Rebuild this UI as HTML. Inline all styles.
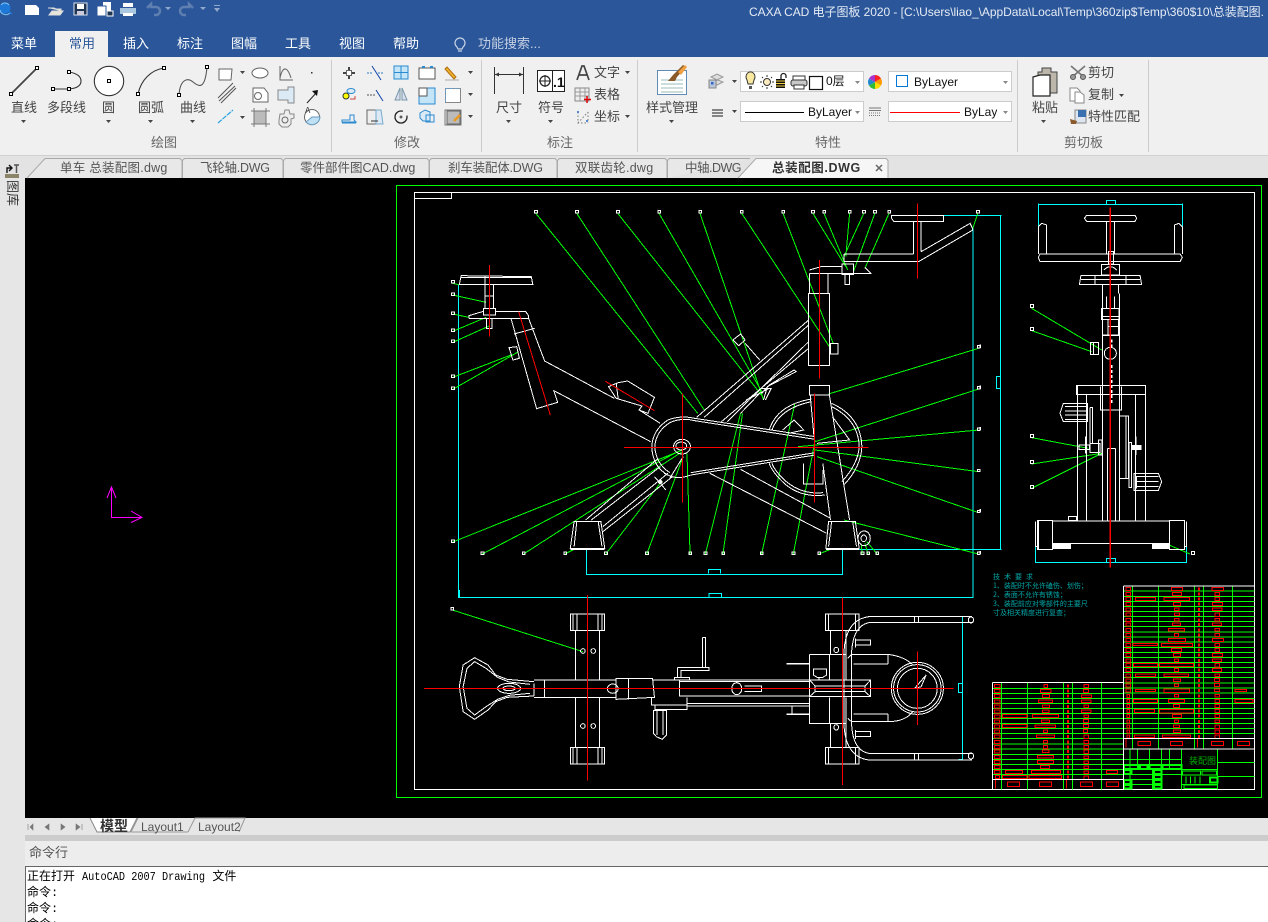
<!DOCTYPE html>
<html lang="zh"><head><meta charset="utf-8"><title>CAXA CAD 电子图板 2020</title>
<style>
html,body{margin:0;padding:0;width:1268px;height:922px;overflow:hidden;background:#f0f0f0}
body{position:relative;font-family:"Liberation Sans","Noto Sans CJK SC",sans-serif;font-size:13px;color:#444}
.b{position:absolute}
.t{position:absolute;line-height:18px;white-space:nowrap}
svg{position:absolute;left:0;top:0}
.d *{vector-effect:non-scaling-stroke;fill:none}
.c{shape-rendering:crispEdges}
.w{stroke:#fff}.g{stroke:#0f0}.r{stroke:#f00}.y{stroke:#0ff}
</style></head><body>
<div class="b" style="left:0;top:0;width:1268px;height:57px;background:#2b579a"></div>
<div class="b" style="left:55px;top:31px;width:53px;height:26px;background:#f0f0f0"></div>
<div class="b" style="left:0;top:57px;width:1268px;height:98px;background:#f0f0f0"></div>
<div class="b" style="left:0;top:155px;width:1268px;height:23px;background:#e3e3e3;border-top:1px solid #d0d0d0;box-sizing:border-box"></div>
<div class="b" style="left:0;top:178px;width:25px;height:744px;background:#e6e6e6"></div>
<div class="b" style="left:25px;top:178px;width:1243px;height:640px;background:#000"></div>
<div class="b" style="left:25px;top:818px;width:1243px;height:17px;background:#e6e6e6"></div>
<div class="b" style="left:25px;top:835px;width:1243px;height:6px;background:#ccc"></div>
<div class="b" style="left:25px;top:841px;width:1243px;height:25px;background:#ededed"></div>
<div class="b" style="left:25px;top:866px;width:1243px;height:56px;background:#fff;border-top:1px solid #666;border-left:1px solid #666;box-sizing:border-box"></div>

<svg width="1268" height="922" viewBox="0 0 1268 922">
<!-- quick access -->
<g>
<circle cx="5" cy="8" r="5.500" fill="#1d78d8"/><path d="M1 5a5 5 0 0 1 8 0M0 10a6 6 0 0 0 10 3" fill="none" stroke="#7cc4f4"/><path d="M8 11l4 3" stroke="#1d78d8" stroke-width="1.500"/>
<path d="M25 5h11l3 3v7H25z" fill="#fff"/>
<path d="M48 8h6l2 1h5v2H52l-3 4h11l3-4h-2" fill="#e8e4d8" stroke="#ddd"/>
<path d="M74 3h13v12H74z" fill="#1f3554" stroke="#dfe4ee"/><path d="M77 4h7v5h-7z" fill="#fff"/><path d="M77 11h7v4h-7z" fill="#ccd"/>
<path d="M103 2h8v9h-8z" fill="#fff"/><path d="M97 6h9v10h-9z" fill="#fff" stroke="#2b579a"/><path d="M107 11h6v5h-6z" fill="#1f3554" stroke="#fff"/>
<path d="M123 3h10v4h-10z" fill="#fff"/><path d="M120 8h16v6h-16z" fill="#a9c7de"/><path d="M123 13h10v3h-10z" fill="#fff"/>
<path d="M147 8l4-4v3h5a4 4 0 0 1 0 8h-2" fill="none" stroke="#5f7fb0" stroke-width="2.500"/>
<path d="M193 8l-4-4v3h-5a4 4 0 0 0 0 8h2" fill="none" stroke="#5f7fb0" stroke-width="2.500"/>
<path d="M165 7h6l-3 3zM200 7h6l-3 3z" fill="#8fa8cc"/>
<path d="M214 5h6v1h-6zM214 8h6l-3 4z" fill="#8fa8cc"/>
</g>
<!-- lightbulb -->
<path d="M457 47a5 5 0 1 1 6 0l-1 2h-4zM458 51h4" fill="none" stroke="#c8d2e4" stroke-width="1.200"/>
<!-- separators -->
<path d="M331.500 60V152M481.500 60V152M637.500 60V152M1017.500 60V152M1148.500 60V152" stroke="#ccc"/>
<!-- big draw icons -->
<g fill="none" stroke="#333">
<path d="M11 94L37 68" stroke="#444" stroke-width="1.800"/>
<path d="M53 89H69M69 72q12 2 12 9t-12 8" stroke-width="1.100"/>
<circle cx="109" cy="81" r="14.700" fill="#fff" stroke-width="1.100"/>
<path d="M138 94C141 80 151 70 164 68" stroke-width="1.100"/>
<path d="M179 95C180 80 187 77 193 82S205 90 207 67" stroke="#555" stroke-width="1.100"/>
<g fill="#fff" stroke="#000"><rect x="9.500" y="92.500" width="3" height="3"/><rect x="35.500" y="66.500" width="3" height="3"/><rect x="51.500" y="87.500" width="3" height="3"/><rect x="67.500" y="87.500" width="3" height="3"/><rect x="67.500" y="70.500" width="3" height="3"/><rect x="107.500" y="79.500" width="3" height="3"/><rect x="136.500" y="92.500" width="3" height="3"/><rect x="162.500" y="66.500" width="3" height="3"/><rect x="177.500" y="93.500" width="3" height="3"/><rect x="205.500" y="65.500" width="3" height="3"/></g>
</g>
<!-- dropdown arrows -->
<path d="M21 120h5l-2.500 3zM106 120h5l-2.500 3zM148 120h5l-2.500 3zM190 120h5l-2.500 3zM240 71h5l-2.500 3zM240 116h5l-2.500 3zM468 71h5l-2.500 3zM468 93h5l-2.500 3zM468 115h5l-2.500 3zM506 120h5l-2.500 3zM548 120h5l-2.500 3zM625 71h5l-2.500 3zM625 115h5l-2.500 3zM669 120h5l-2.500 3zM732 80h5l-2.500 3zM732 110h5l-2.500 3zM1041 120h5l-2.500 3zM1119 94h5l-2.500 3z" fill="#444"/>
<!-- small draw icons -->
<g fill="none" stroke="#666">
<path d="M219 69h13l-1 11h-12z" fill="#fff"/>
<ellipse cx="260" cy="73" rx="8" ry="5" fill="#fff"/>
<path d="M280 66V80H293M280 78C283 64 288 68 291 78"/>
<rect x="311" y="72" width="1.500" height="1.500" fill="#333" stroke="none"/>
<path d="M218 98L233 83M219 101L235 86M221 103L236 88" stroke="#555"/>
<path d="M253 88h11l4 5v9h-15z" fill="#fff"/><circle cx="258" cy="96" r="3.500"/>
<path d="M278 90h10v-3h6v16h-6v-3h-10z" fill="#dceaf6" stroke="#888"/>
<path d="M307 103L317 92" stroke="#222"/><path d="M312 91l6-1-1 6z" fill="#111" stroke="none"/>
<path d="M218 123L233 110" stroke="#2aa4e0" stroke-dasharray="5 1" stroke-width="1.200"/>
<rect x="254" y="111" width="12" height="13" fill="#bbb"/><path d="M251 111h19M251 124h19M254 108v19M266 108v19" stroke="#777"/>
<path d="M280 114h4l1-4h4l1 4h4v4l-3 1v5l-3 3h-6l-3-3v-4z" fill="#eee" stroke="#888"/><circle cx="285" cy="120" r="3"/>
<circle cx="312" cy="117" r="7.500" fill="#fff"/><path d="M312 117h8a8 8 0 0 1-14 5z" fill="#bfe0f5" stroke="#69b"/><text x="305" y="113" font-size="8" fill="#333" stroke="none" style="fill:#333">A</text>
<!-- modify -->
<path d="M349 67v4M349 75v4M343 73h4M351 73h4" stroke="#444" stroke-width="2"/><rect x="346.500" y="70.500" width="5" height="5" fill="#fff"/>
<path d="M367 73h6M378 73h5" stroke="#2b7ac4" stroke-dasharray="2 1"/><path d="M372 66L381 80" stroke="#14a"/>
<rect x="394" y="66" width="14" height="13" fill="#c4e4f8" stroke="#2a8ad0"/><path d="M401 66v13M394 72.500h14" stroke="#2a8ad0"/>
<rect x="419" y="68" width="16" height="11" fill="#fff" stroke="#555"/><path d="M422 67h3M430 67h3" stroke="#2a8ad0" stroke-width="2"/>
<path d="M445 69l9 10 2-2-9-10z" fill="#f0b030" stroke="#b07010"/><path d="M445 80h14" stroke="#aaa"/>
<circle cx="346" cy="96" r="3" fill="#ff0" stroke="#333"/><ellipse cx="351" cy="91" rx="4" ry="2.500" fill="#dceaf6" stroke="#2a8ad0"/><path d="M350 99h5v-3" stroke="#c44"/>
<path d="M367 95h8" stroke="#555" stroke-dasharray="2 1"/><path d="M376 90L383 101" stroke="#14a"/>
<path d="M400 88l-5 12h5zM402 88l5 12h-5z" fill="#dde" stroke="#79a"/>
<rect x="419" y="88" width="16" height="16" fill="#c4e4f8" stroke="#2a8ad0"/><rect x="419" y="88" width="8" height="8" fill="#fff" stroke="#555"/>
<rect x="445.500" y="88.500" width="15" height="14" fill="#fff" stroke="#888"/><path d="M445.500 102V88.500H460" stroke="#6a9fd0" stroke-dasharray="3 1.500"/>
<path d="M342 120h8v-5h4v5l2 2H342zM342 123h14" stroke="#2a8ad0" fill="none"/>
<path d="M367 110h9v14h-9z" fill="#eee" stroke="#666"/><path d="M376 110h5l2 14h-7z" fill="#dceaf6" stroke="#7ac"/><path d="M371 121h7" stroke="#333"/>
<circle cx="401" cy="117" r="6" stroke="#222" stroke-width="1.300" stroke-dasharray="30 6"/><circle cx="401" cy="117" r="1" fill="#222"/>
<path d="M420 113l5-3 5 2v9h-7l-3-3z" fill="#dceaf6" stroke="#2a8ad0"/><rect x="426" y="115" width="8" height="7" stroke="#2a8ad0"/>
<rect x="447" y="111" width="13" height="13" fill="#bbb"/><path d="M445 110v15h16V110z" stroke="#777"/><path d="M454 121l6-6" stroke="#e89a20" stroke-width="2.500"/>
<!-- dim -->
<path d="M494.500 67V94M523.500 67V94M495 74.500H523" stroke="#333" stroke-width="1"/>
<path d="M495 74.500l4-2v4zM523 74.500l-4-2v4z" fill="#333" stroke="none"/>
<rect x="537.500" y="70.500" width="27" height="21" fill="#fff" stroke="#222"/><path d="M552.500 71V91" stroke="#222"/>
<circle cx="545" cy="81" r="5" stroke="#222" stroke-width="1.200"/><path d="M539 81h12M545 75v12" stroke="#222"/>
<text x="553" y="87" font-size="14" font-weight="bold" fill="#111" stroke="none" font-family="Liberation Sans">.1</text>
<path d="M577 80l5-14h2l5 14M579 75h8" stroke="#444" stroke-width="1.700"/>
<rect x="575" y="88" width="14" height="13" fill="#eee" stroke="#888"/><path d="M575 92h14M575 96h14M580 88v13M585 88v13" stroke="#999"/><path d="M587 96v7M584 99.500h7" stroke="#d00" stroke-width="1.500"/>
<path d="M578 112v11h10M588 112v11M578 123l10-11" stroke="#777" stroke-dasharray="1.500 2"/><rect x="577" y="111" width="2" height="2" fill="#58c" stroke="none"/><rect x="586" y="120" width="2" height="2" fill="#58c" stroke="none"/>
<!-- style manager -->
<rect x="657.500" y="70.500" width="29" height="24" fill="#fff" stroke="#5f8bb5"/>
<path d="M661 80h22M661 84h22M661 88h22M661 92h22" stroke="#9bb"/>
<path d="M668 81l5-6 10-10 3 2-9 10-2 4z" fill="#8b5a2b" stroke="none"/><path d="M678 72l7-7 2 2-6 8z" fill="#f0a040" stroke="none"/>
<!-- layer icon -->
<path d="M711 77l6-3 6 3-6 3zM713 82l5-2 5 2-6 3z" fill="#ddd" stroke="#999"/><rect x="709" y="80" width="7" height="8" fill="#b8c6da" stroke="#888"/><rect x="711" y="82" width="2.500" height="2.500" fill="#36c" stroke="none"/>
<path d="M712 110h11M712 113h11M712 116h11" stroke="#444" stroke-width="1.300"/>
</g>
<g fill="none">
<rect x="740.500" y="71.500" width="123" height="20" fill="#fff" stroke="#ccc"/>
<rect x="740.500" y="101.500" width="123" height="20" fill="#fff" stroke="#ccc"/>
<rect x="888.500" y="71.500" width="123" height="20" fill="#fff" stroke="#ccc"/>
<rect x="888.500" y="101.500" width="123" height="20" fill="#fff" stroke="#ccc"/>
<path d="M747 80a4.500 5 0 1 1 7 0l-1 4h-5z" fill="#f8e8a0" stroke="#333"/><path d="M749 86h3v3h-3z" fill="#555"/>
<circle cx="767" cy="82" r="3.500" fill="#fcecc0" stroke="#333"/><path d="M767 75v2M767 87v2M760 82h2M772 82h2M762 77l1 1M771 86l1 1M762 87l1-1M771 78l1-1" stroke="#333"/>
<path d="M776 79h9v9h-9z" fill="#111"/><path d="M776 81h9M776 83.500h9M776 86h9" stroke="#f0d040"/><path d="M781 79v-3a2.500 2.500 0 0 1 5 0v2" stroke="#222" stroke-width="1.300"/>
<rect x="793" y="76" width="12" height="4" fill="#fff" stroke="#333"/><rect x="791" y="80" width="16" height="6" rx="2" fill="#c8c8c8" stroke="#333"/><rect x="794" y="85" width="10" height="4" fill="#fff" stroke="#333"/>
<rect x="809.500" y="76.500" width="13" height="13" fill="#fff" stroke="#111" stroke-width="1.200"/>
<path d="M855 81h5l-2.500 3zM855 111h5l-2.500 3zM1003 81h5l-2.500 3zM1003 111h5l-2.500 3z" fill="#888"/>
<path d="M745 112.500H804" stroke="#000"/><path d="M890 112.500H960" stroke="#f00"/>
<rect x="896.500" y="75.500" width="11" height="11" stroke="#0078d7" fill="#fff"/>
<path d="M869 108h12M869 110.500h12" stroke="#777"/><path d="M869 113h12M869 115.500h12" stroke="#777" stroke-dasharray="1 1"/>
<!-- colour wheel -->
<circle cx="875" cy="82" r="6.500" fill="#fff"/>
<path d="M875 82V75A7 7 0 0 1 881 78.500z" fill="#f22"/><path d="M875 82L881 78.500A7 7 0 0 1 881 85.500z" fill="#f90"/><path d="M875 82L881 85.500A7 7 0 0 1 875 89z" fill="#fd0"/><path d="M875 82V89A7 7 0 0 1 869 85.500z" fill="#3b3"/><path d="M875 82L869 85.500A7 7 0 0 1 869 78.500z" fill="#28c"/><path d="M875 82L869 78.500A7 7 0 0 1 875 75z" fill="#a3c"/>
<!-- paste -->
<path d="M1038 72h4v-4h9v4h6v21h-19z" fill="#bdb7ab" stroke="#444"/>
<path d="M1033 77l7-2h10v21h-17z" fill="#fff" stroke="#222" stroke-width="1.200"/>
<path d="M1071 66l14 12M1085 66l-14 12" stroke="#777" stroke-width="1.700"/><circle cx="1073" cy="77" r="2.500" stroke="#555" fill="#999"/><circle cx="1083" cy="77" r="2.500" stroke="#555" fill="#999"/>
<path d="M1070 88h7l3 3v10h-10z" fill="#fff" stroke="#888"/><path d="M1075 92h5l4 3v8h-9z" fill="#fff" stroke="#888"/>
<rect x="1075" y="110" width="11" height="13" fill="#dde6f0" stroke="#888"/><rect x="1078" y="110" width="8" height="7" fill="#3a70b0"/><path d="M1070 119l7 2-1 3h-5z" fill="#8b5a2b"/>
</g>
<!-- doc tabs -->
<g fill="none" stroke="#aaa">
<path d="M27 178L45 158.500H180l2 2V178" fill="#e8e8e8"/>
<path d="M182.500 178V160.500l2-2H281l2 2V178" fill="#e8e8e8"/>
<path d="M283.500 178V160.500l2-2H427l2 2V178" fill="#e8e8e8"/>
<path d="M429.500 178V160.500l2-2H555l2 2V178" fill="#e8e8e8"/>
<path d="M557.500 178V160.500l2-2H665l2 2V178" fill="#e8e8e8"/>
<path d="M667.500 178V160.500l2-2H750" fill="#e8e8e8"/>
<path d="M738 178L756 158.500H886l2 2V178" fill="#f6f6f6"/>
<path d="M876 165l6 6M882 165l-6 6" stroke="#666" stroke-width="1.500"/>
</g>
<!-- library icon -->
<rect x="5" y="174" width="14" height="4" fill="#8a8468"/><path d="M7 173v-5h4M9 165l3 3-3 3" fill="none" stroke="#111" stroke-width="1.400"/><path d="M14 165h5M16.500 165v8" stroke="#555" stroke-width="1.500"/>
<!-- layout tabs -->
<path d="M90 818l7 14h33l7-14" fill="#fff" stroke="#888"/>
<path d="M131 832l7-14M188 832l7-14h50l-6 14M188 832H131" fill="none" stroke="#999"/>
<path d="M28 824v6M33 824l-3 3 3 3zM49 824l-4 3 4 3zM61 824l4 3-4 3zM76 824l4 3-4 3zM82 824v6" fill="#777" stroke="#777" stroke-width=".6"/>

<!-- CAD -->
<rect x="396.500" y="185.500" width="865" height="612" fill="none" stroke="#0f0" shape-rendering="crispEdges"/>
<rect x="414.500" y="192.500" width="840" height="597" fill="none" stroke="#fff" shape-rendering="crispEdges"/>
<path d="M415 198.500H451.500V192.500" fill="none" stroke="#fff" shape-rendering="crispEdges"/>
<!-- UCS -->
<g fill="none" stroke="#f0f"><path d="M111.500 517V487M107 498l4.500-11 4.500 11M111 517.500H142M131 511l11 6.500-11 5"/></g>

<!-- side elevation z4 -->
<g class="d c" transform="matrix(.38265 0 0 .33333 400 180)">
<path class="y" d="M153 315V1253H1498V140M1405 106H1568M1185 1108H1568M488 1108V1183H1157V1108M806 1180V1168H838V1180M808 1253V1240H840V1253"/>
<path class="g" d="M355 100L778 700M462 100L795 690M569 100L948 650M677 100L948 640M784 100L950 660M893 100L1125 505M1001 100L1132 490M1079 100L1165 260M1108 100L1170 270M1175 100L1165 230M1212 100L1160 230M1241 100L1185 275M1278 100L1215 265M1510 100L1497 145M138 310L155 315M138 345L225 367M138 402L180 412M138 454L225 412M138 487L235 437M138 592L290 525M138 628L310 515M138 1086L738 810M215 1122L738 808M323 1122L738 815M431 1122L460 1105M538 1122L680 910M645 1122L740 830M758 1122L750 820M798 1122L890 700M844 1122L895 700M945 1122L1032 670M1028 1122L1085 780M1095 1122L1125 1108M1208 1122L1205 1090M1223 1122L1215 1090M1247 1122L1220 1085M1512 505L1120 642M1512 627L1085 785M1512 750L1040 800M1512 875L1085 810M1512 998L1090 830M1512 1122L1160 1020"/>
<path class="w" d="M352 92h7v7h-7zM459 92h7v7h-7zM566 92h7v7h-7zM674 92h7v7h-7zM781 92h7v7h-7zM890 92h7v7h-7zM998 92h7v7h-7zM1076 92h7v7h-7zM1105 92h7v7h-7zM1172 92h7v7h-7zM1209 92h7v7h-7zM1238 92h7v7h-7zM1275 92h7v7h-7zM1507 92h7v7h-7zM135 302h7v7h-7zM135 339h7v7h-7zM135 396h7v7h-7zM135 447h7v7h-7zM135 480h7v7h-7zM135 585h7v7h-7zM135 621h7v7h-7zM135 1080h7v7h-7zM212 1116h7v7h-7zM320 1116h7v7h-7zM428 1116h7v7h-7zM535 1116h7v7h-7zM642 1116h7v7h-7zM755 1116h7v7h-7zM795 1116h7v7h-7zM841 1116h7v7h-7zM942 1116h7v7h-7zM1025 1116h7v7h-7zM1092 1116h7v7h-7zM1205 1116h7v7h-7zM1220 1116h7v7h-7zM1244 1116h7v7h-7zM1509 497h7v7h-7zM1509 620h7v7h-7zM1509 744h7v7h-7zM1509 868h7v7h-7zM1509 991h7v7h-7zM1509 1116h7v7h-7z"/>
<g class="w">
<path d="M155 313H347L343 290 160 287ZM160 293H343M222 287V313M222 313V385M245 313V385M222 348H245M180 415H336V407L328 394H250M218 394L180 407V415M226 415V445H240V415"/>
<path d="M218 385H250V405H218ZM290 415L357 686 412 667 402 632 655 785M336 415L378 543 560 655M625 690L680 730M298 462L352 445M285 503L305 500 312 535 295 540Z"/>
<path d="M545 620L570 608 595 603 665 652 648 700 625 690 632 678 565 655 545 620ZM565 610L570 655"/>
<path d="M770 715Q735 705 700 720 660 750 658 800 660 860 700 885 725 900 760 885 M770 722Q735 712 705 728 668 755 666 800 668 850 705 878"/>
<path d="M770 715L1085 770M770 722L1085 778M760 885L1085 825M760 878L1085 818"/>
<ellipse cx="737" cy="800" rx="22" ry="22"/><ellipse cx="735" cy="798" rx="14" ry="12"/>
<path d="M775 712L1068 420M795 712L1068 435M840 725L1068 505M855 725L1068 485M1067 340H1122V556H1067ZM1070 280V340M1118 280V340M1070 280H1230L1215 262M1070 270L1100 260H1155M1155 252H1185V283H1155ZM1163 283V313H1175V283M1125 490H1145V522H1125Z"/>
<path d="M1285 107H1420V124H1290L1285 115ZM1342 124V222M1362 124V215M1160 222H1342M1160 245H1355L1497 150M1362 215L1490 130 1497 148M1160 222V245"/>
<path d="M870 480L890 462 902 480 885 497ZM902 490L940 540M890 700L940 640M950 660L960 620 1035 575 1030 570 965 615 945 640M905 660L965 625M945 625L970 625 955 660"/>
<path d="M965 750Q985 675 1075 657M972 750Q992 685 1075 665M1128 670Q1205 710 1207 800 1205 860 1160 915M1128 680Q1198 720 1200 800 1198 850 1155 905M1110 945Q1040 955 995 900 970 870 965 850M1105 938Q1045 945 1000 895 978 870 972 850"/>
<path d="M1070 616H1122V645H1070ZM1072 645L1082 770M1122 645L1130 700 1160 915 1175 1020M1105 850L1125 1020M810 880L1115 1060M890 868L1125 1015M1130 710L1175 780 1090 790M1000 750L1030 720 1055 750 1015 760M1055 850V912H1105V870"/>
<path d="M455 1025H525L535 1105H445ZM462 1025L455 1100M518 1025L528 1100M445 1108H535M1120 1025H1190L1200 1105H1113ZM1128 1025L1120 1100M1183 1025L1193 1100M1113 1108H1200"/>
<path d="M485 1020L675 835M500 1020L680 860M530 1040L700 880M530 1055L712 890M665 890L695 930M740 830L705 895M690 880L700 885"/>
<ellipse cx="1213" cy="1075" rx="16" ry="22"/><ellipse cx="1212" cy="1075" rx="7" ry="10"/>
</g>
<circle cx="680" cy="906" r="5" fill="#fff" stroke="#fff" style="fill:#fff"/>
<path class="r" d="M310 395L393 706M537 604L665 692M585 802H1225M738 640V968M1083 640V968M1352 70V296M1096 240V596M234 255V470"/>
</g>

<!-- plan view z5 -->
<g class="d c" transform="matrix(.38265 0 0 .33333 400 590)">
<path class="y" d="M1470 78V508M1460 80H1470M1460 508H1470M1470 280H1460V308H1470M155 0V22H1498V0"/>
<path class="g" d="M137 60L478 185"/>
<path class="w" d="M133 52h7v8h-7z"/>
<g class="w">
<path d="M445 72H535V122H445ZM452 72V122M462 72V122M518 72V122M528 72V122M445 472H535V522H445ZM452 472V522M462 472V522M518 472V522M528 472V522M458 122V270M522 122V270M458 322V472M522 322V472"/>
<ellipse cx="478" cy="183" rx="6" ry="7"/><ellipse cx="505" cy="183" rx="6" ry="7"/><ellipse cx="478" cy="408" rx="6" ry="7"/><ellipse cx="505" cy="408" rx="6" ry="7"/>
<path d="M1112 72H1200V122H1112ZM1120 72V122M1190 72V122M1112 472H1200V522H1112ZM1120 472V522M1190 472V522M1125 122V193M1125 400V472M1165 122V193M1165 400V472"/>
<path d="M350 270H565M350 322H565M378 270V322M565 265H660L665 322 565 328 Z M597 265V328M660 270H1070M730 275H1070M730 318H1070M730 270V320M657 322V345H750V358H667V345M750 340H1070M750 348H1070M750 322V345"/>
<path d="M350 275L280 268 250 255 230 225 195 203 165 225 155 290 165 365 195 388 230 360 250 335 280 322 350 318M340 283L285 276 255 262 225 235 195 215 175 235 165 290 175 355 195 375 225 350 255 328 285 316 340 310"/>
<ellipse cx="285" cy="295" rx="30" ry="15"/><ellipse cx="285" cy="295" rx="16" ry="7"/><ellipse cx="556" cy="296" rx="14" ry="14"/><ellipse cx="880" cy="296" rx="13" ry="18"/>
<path d="M350 280V318M900 288H945V304H900M790 142H798V232M790 142V232M725 232H808V242H735V262M725 232V262M717 262H757V270H717Z"/>
<path d="M662 362H697V435L685 448 670 440 662 430ZM672 362V435M687 362V435"/>
<path d="M1070 193H1165V270M1070 193V270M1070 322V400H1165V322M1122 193V270M1122 322V400M1010 222H1070M1010 220H1070M1010 372H1070M1010 374H1070M1025 350V372"/>
<path d="M1070 270H1230V320H1070ZM1070 270L1085 288V305L1070 320M1230 270L1215 288V305L1230 320M1085 288H1215M1085 305H1215M1180 288V305"/>
<path d="M1495 80H1225Q1160 90 1160 200V390Q1160 500 1225 510H1495M1495 98H1225Q1180 110 1180 200V390Q1180 480 1225 490H1495M1345 80V98M1355 80V98M1345 490V510M1355 490V510"/>
<ellipse cx="1492" cy="90" rx="7" ry="9"/><ellipse cx="1492" cy="498" rx="7" ry="9"/>
<path d="M1170 205L1180 193H1275Q1320 200 1340 225M1170 385L1180 395H1275Q1320 395 1340 365M1185 222H1275M1185 372H1275M1275 193V222M1275 372V395"/>
<ellipse cx="1352" cy="295" rx="68" ry="78"/><ellipse cx="1352" cy="295" rx="62" ry="71"/><ellipse cx="1352" cy="295" rx="52" ry="60"/>
<path d="M1345 295L1375 255 1362 290 1345 295M1190 150H1230V165H1190ZM1190 145V172M1190 425H1230V440H1190ZM1190 420V447"/>
<ellipse cx="1140" cy="180" rx="6" ry="8"/><ellipse cx="1140" cy="412" rx="6" ry="8"/><path d="M1080 237H1115V255L1105 262H1090L1080 255ZM1095 262V270"/>
</g>
<path class="r" d="M63 295H1447M490 15V572M1156 22V585M1352 185V405"/>
</g>

<!-- front elevation z6 -->
<g class="d c" transform="matrix(.33333 0 0 .33333 980 180)">
<path class="y" d="M0 106H65M61 106V1108M0 1108H65M49 590H61V625H49ZM175 70V140M175 73H607M607 70V140M379 73V62H407V73M166 1070V1148H619V1070M379 1148V1135H407V1148"/>
<path class="g" d="M155 385L365 510M155 452L335 515M155 773L325 805M155 852L365 820M155 925L365 820M630 1122L560 1092"/>
<path class="w" d="M151 374h9v9h-9zM151 442h9v9h-9zM151 763h9v9h-9zM151 842h9v9h-9zM151 916h9v9h-9zM635 1114h9v9h-9zM0 495h2v7h-2zM0 618h2v7h-2zM0 742h2v7h-2zM0 988h2v7h-2zM0 1114h2v7h-2z"/>
<g class="w">
<path d="M313 115L320 106H465L470 115 465 124H320ZM379 124V222M404 124V222M180 222H600L607 232 600 245H180L175 232ZM175 222V140L185 130 200 135V222M583 222V135L597 130 607 140V222M385 215H400V252H385Z"/>
<path d="M364 253H419V285H364ZM372 270Q391 250 410 270M303 286H480L485 314H298ZM345 286V314M438 286V314M303 298H480M367 314V340M416 314V340M367 340V685M419 340V685M380 350V385M404 350V385M364 385H417V418H364ZM364 410H417M384 418V465M416 418V465M385 440H416M367 465H417M367 467H417"/>
<circle cx="391" cy="520" r="18"/>
<path d="M361 620V690H425V620M289 616H497V644H289ZM292 616V644M292 644V1023M320 644V1023M466 644V1023M497 644V1023M367 616V690M419 616V690M367 690V1023M419 690V1023M382 805V1023M407 805V1023M382 805H407"/>
<path d="M250 670H323V725H250L240 700ZM255 680H320M255 693H320M255 705H320M255 718H320M462 880H535L545 905 535 932H462ZM468 890H535M468 905H535M468 920H535M470 890V925M330 682H338V790M330 682V790M420 708H445V895H420M438 708V895M447 787H455V922H447ZM330 790H360V818H330ZM356 780H366V825H356ZM297 795H328V808H297ZM316 770V820M468 770V825M332 487H356V523H332ZM340 487V523"/>
<path d="M218 1023H568M218 1090H568M172 1021H218V1108H172ZM166 1025V1100H172M175 1021V1108M568 1021H614V1108H568ZM620 1025V1100H614M265 1010H290V1022H265Z"/>
</g>
<path d="M218 1090H272V1105H218ZM517 1090H568V1105H517ZM455 796H483V808H455Z" style="fill:#fff" stroke="#fff"/>
<path d="M393 478V502M393 555V672" style="stroke:#fff;stroke-width:3;stroke-dasharray:3 2"/>
<path class="r" d="M391 82V1163" style="stroke-width:1.500"/>
</g>

<!-- tables z7 -->
<g class="d c" transform="matrix(.33333 0 0 .33333 980 570)">
<path class="g" d="M430 63H824M430 79H824M430 94H824M430 109H824M430 125H824M430 140H824M430 155H824M430 170H824M430 186H824M430 201H824M430 216H824M430 232H824M430 247H824M430 262H824M430 277H824M430 293H824M430 308H824M430 323H824M430 339H824M430 354H824M430 369H824M430 385H824M430 400H824M430 415H824M430 430H824M430 446H824M430 461H824M430 476H824M430 491H824M457 48V537M535 48V537M643 48V537M670 48V537M757 48V537"/>
<path class="g" d="M37 355H430M37 370H430M37 385H430M37 400H430M37 415H430M37 431H430M37 446H430M37 461H430M37 476H430M37 491H430M37 506H430M37 522H430M37 537H430M37 553H430M37 568H430M37 583H430M37 598H430M37 613H430M65 337V658M142 337V658M250 337V658M277 337V658M364 337V658"/>
<path class="g" d="M430 568H604M430 613H604M432 628H520M432 643H520M450 537V658M472 537V598M508 537V598M518 598V658M545 537V658M568 537V598M604 537V658M713 537V658M713 577H824M713 619H824M604 598H713M604 643H713M608 603H662V615H608ZM666 603H710V615H666ZM612 645H712V655H612ZM618 620V640M632 620V640M645 620V640M660 620V640"/>
<path class="g" style="stroke-width:2" d="M432 585H475V597H432ZM480 585H502V597H480ZM508 585H545V597H508ZM548 585H604V597H548ZM432 600H455V612H432ZM432 630H455V642H432ZM432 645H455V656H432ZM522 600H545V612H522ZM522 615H545V627H522ZM522 630H545V642H522ZM522 645H545V656H522ZM690 622H712V638H690Z"/>
<path class="r" d="M438 53h13v9h-13zM438 68h13v9h-13zM438 83h13v9h-13zM438 98h13v9h-13zM438 114h13v9h-13zM438 129h13v9h-13zM438 145h13v9h-13zM438 159h13v9h-13zM438 175h13v9h-13zM438 191h13v9h-13zM438 206h13v9h-13zM438 221h13v9h-13zM438 236h13v9h-13zM438 251h13v9h-13zM438 267h13v9h-13zM438 281h13v9h-13zM438 296h13v9h-13zM438 312h13v9h-13zM438 327h13v9h-13zM438 342h13v9h-13zM438 357h13v9h-13zM441 373h8v9h-8zM441 389h8v9h-8zM441 404h8v9h-8zM441 419h8v9h-8zM441 434h8v9h-8zM441 450h8v9h-8zM441 465h8v9h-8zM441 480h8v9h-8zM441 495h8v9h-8z"/>
<path class="r" style="stroke-width:2" d="M657 53v9M657 68v9M657 83v9M657 98v9M657 114v9M657 129v9M657 145v9M657 159v9M657 175v9M657 191v9M657 206v9M657 221v9M657 236v9M657 251v9M657 267v9M657 281v9M657 296v9M657 312v9M657 327v9M657 342v9M657 357v9M657 373v9M657 389v9M657 404v9M657 419v9M657 434v9M657 450v9M657 465v9M657 480v9M657 495v9M264 344v9M264 359v9M264 374v9M264 390v9M264 405v9M264 420v9M264 435v9M264 450v9M264 465v9M264 480v9M264 495v9M264 511v9M264 526v9M264 540v9M264 556v9M264 571v9M264 586v9M264 602v9M264 617v9"/>
<path class="r" d="M44 344h16v9H44zM44 359h16v9H44zM44 374h16v9H44zM44 390h16v9H44zM44 405h16v9H44zM44 420h16v9H44zM44 435h16v9H44zM44 450h14v9H44zM44 465h14v9H44zM44 480h14v9H44zM44 495h16v9H44zM44 511h16v9H44zM44 526h16v9H44zM44 540h16v9H44zM44 556h16v9H44zM44 571h16v9H44zM44 586h16v9H44zM44 602h16v9H44zM46 617h12v9H46z"/>
<path class="r" d="M574 53H608V61H574ZM577 68H605V76H577ZM552 83H629V91H552ZM466 83H527V91H466ZM580 98H602V106H580ZM583 114H597V122H583ZM583 129H598V137H583ZM583 145H597V153H583ZM577 159H602V167H577ZM565 175H614V183H565ZM583 191H596V199H583ZM565 206H617V214H565ZM544 221H638V229H544ZM459 221H533V227H459ZM574 236H605V244H574ZM580 251H602V259H580ZM583 267H596V275H583ZM538 281H641V289H538ZM460 281H533V289H460ZM583 296H596V304H583ZM552 312H626V320H552ZM466 312H527V320H466ZM580 327H602V335H580ZM583 342H596V350H583ZM552 357H629V367H552ZM466 358H527V365H466ZM583 373H596V381H583ZM565 389H614V397H565ZM460 389H533V397H460ZM580 404H599V412H580ZM538 419H641V429H538ZM463 419H524V427H463ZM577 434H605V442H577ZM583 450H596V458H583ZM580 465H599V473H580ZM580 480H602V488H580ZM547 495H632V503H547ZM463 495H524V503H463Z"/>
<path class="r" d="M696 53H730V61H696ZM705 68H719V76H705ZM705 83H719V91H705ZM697 98H728V106H697ZM697 114H726V122H697ZM705 129H719V139H705ZM705 145H719V153H705ZM697 159H725V167H697ZM705 175H719V183H705ZM705 191H719V199H705ZM697 206H731V214H697ZM705 221H719V229H705ZM705 236H719V244H705ZM697 251H728V259H697ZM697 267H725V275H697ZM705 281H719V291H705ZM697 296H725V304H697ZM705 312H719V320H705ZM703 325H719V335H703ZM703 340H719V350H703ZM703 357H719V365H703ZM705 373H719V381H705ZM705 389H719V397H705ZM705 404H719V412H705ZM705 419H719V427H705ZM705 434H719V442H705ZM705 450H719V458H705ZM705 465H719V475H705ZM705 480H719V490H705ZM705 495H719V505H705ZM765 358H800V365H765ZM765 389H819V397H765ZM474 514H512V526H474ZM571 514H608V526H571ZM694 514H731V526H694ZM772 514H809V526H772Z"/>
<path class="r" d="M192 344H203V352H192ZM181 359H213V367H181ZM187 374H209V382H187ZM175 390H218V398H175ZM187 405H209V413H187ZM187 420H207V428H187ZM157 434H236V443H157ZM67 434H141V443H67ZM184 450H209V458H184ZM165 465H227V473H165ZM67 463H141V473H67ZM190 480H203V488H190ZM169 495H224V503H169ZM190 511H203V519H190ZM190 526H203V536H190ZM187 540H207V548H187ZM172 556H221V564H172ZM172 571H221V581H172ZM181 586H209V596H181ZM154 601H242V611H154ZM76 601H128V611H76ZM147 616H245V626H147ZM67 616H141V626H67ZM312 343H326V353H312ZM310 358H326V368H310ZM304 375H335V383H304ZM304 390H333V398H304ZM312 405H326V413H312ZM304 420H333V428H304ZM312 435H326V443H312ZM310 448H326V458H310ZM310 463H326V473H310ZM310 478H323V488H310ZM312 495H326V505H312ZM312 511H326V521H312ZM312 526H326V536H312ZM312 540H326V550H312ZM312 558H326V566H312ZM312 573H326V581H312ZM312 588H326V596H312ZM312 603H326V611H312ZM312 618H326V628H312ZM379 601H413V611H379ZM82 636H119V650H82ZM178 636H215V650H178ZM301 636H338V650H301ZM379 636H416V650H379Z"/>
<path class="r" d="M438 507V533M652 507V533M46 630V655M259 630V655"/>
<path class="w" d="M430 48H824M430 48V658M37 337H430M37 337V658M430 505H824M430 537H824M37 628H430"/>
</g>
</svg>

<!-- tech notes -->
<div class="b" style="left:993px;top:573px;font:7px/9px 'Noto Sans CJK SC',sans-serif;color:#00a8a8;white-space:nowrap">
<div style="letter-spacing:4px">技术要求</div>
<div style="margin-top:0">1、装配时不允许磕伤、划伤；</div>
<div>2、表面不允许有锈蚀；</div>
<div>3、装配前应对零部件的主要尺</div>
<div>寸及相关精度进行复查；</div>
</div>
<div class="b" style="left:1189px;top:755px;font:9px/11px 'Noto Sans CJK SC',sans-serif;color:#0a0;white-space:nowrap">装配图</div>

<!-- title + tabs -->
<div class="t" style="left:749px;top:3px;font-size:12px;color:#e6ebf4;letter-spacing:-.05px">CAXA CAD 电子图板 2020 - [C:\Users\liao_\AppData\Local\Temp\360zip$Temp\360$10\总装配图.</div>
<div class="t" style="left:11px;top:35px;color:#fff">菜单</div>
<div class="t" style="left:69px;top:35px;color:#2b579a">常用</div>
<div class="t" style="left:123px;top:35px;color:#fff">插入</div>
<div class="t" style="left:177px;top:35px;color:#fff">标注</div>
<div class="t" style="left:231px;top:35px;color:#fff">图幅</div>
<div class="t" style="left:285px;top:35px;color:#fff">工具</div>
<div class="t" style="left:339px;top:35px;color:#fff">视图</div>
<div class="t" style="left:393px;top:35px;color:#fff">帮助</div>
<div class="t" style="left:478px;top:35px;color:#c5cfe2">功能搜索...</div>
<!-- ribbon labels -->
<div class="t" style="left:11px;top:99px">直线</div>
<div class="t" style="left:47px;top:99px">多段线</div>
<div class="t" style="left:102px;top:99px">圆</div>
<div class="t" style="left:138px;top:99px">圆弧</div>
<div class="t" style="left:180px;top:99px">曲线</div>
<div class="t" style="left:496px;top:99px">尺寸</div>
<div class="t" style="left:538px;top:99px">符号</div>
<div class="t" style="left:594px;top:64px">文字</div>
<div class="t" style="left:594px;top:86px">表格</div>
<div class="t" style="left:594px;top:108px">坐标</div>
<div class="t" style="left:646px;top:99px">样式管理</div>
<div class="t" style="left:1032px;top:99px">粘贴</div>
<div class="t" style="left:1088px;top:64px">剪切</div>
<div class="t" style="left:1088px;top:86px">复制</div>
<div class="t" style="left:1088px;top:108px">特性匹配</div>
<div class="t" style="left:151px;top:134px;color:#666">绘图</div>
<div class="t" style="left:394px;top:134px;color:#666">修改</div>
<div class="t" style="left:547px;top:134px;color:#666">标注</div>
<div class="t" style="left:815px;top:134px;color:#666">特性</div>
<div class="t" style="left:1064px;top:134px;color:#666">剪切板</div>
<!-- combos -->
<div class="t" style="left:826px;top:72px;color:#111;font-size:12px">0层</div>
<div class="t" style="left:914px;top:73px;color:#111;font-size:12px">ByLayer</div>
<div class="t" style="left:808px;top:103px;color:#111;font-size:12px">ByLayer</div>
<div class="t" style="left:964px;top:103px;width:33px;overflow:hidden;color:#111;font-size:12px">ByLayer</div>
<!-- doc tab labels -->
<div class="t" style="left:60px;top:159px;font-size:12.500px;color:#555;letter-spacing:.25px">单车 总装配图.dwg</div>
<div class="t" style="left:200px;top:159px;font-size:12.500px;color:#555;letter-spacing:-.25px">飞轮轴.DWG</div>
<div class="t" style="left:300px;top:159px;font-size:12.500px;color:#555">零件部件图CAD.dwg</div>
<div class="t" style="left:448px;top:159px;font-size:12.500px;color:#555;letter-spacing:-.2px">刹车装配体.DWG</div>
<div class="t" style="left:575px;top:159px;font-size:12.500px;color:#555;letter-spacing:.25px">双联齿轮.dwg</div>
<div class="t" style="left:685px;top:159px;font-size:12.500px;color:#555;letter-spacing:-.5px">中轴.DWG</div>
<div class="t" style="left:772px;top:159px;font-size:12.500px;font-weight:bold;color:#333;letter-spacing:.6px">总装配图.DWG</div>
<div class="b" style="left:3px;top:180px;width:18px;height:26px;font-size:13px;line-height:18px;color:#333;writing-mode:vertical-rl;text-orientation:sideways;white-space:nowrap">图库</div>
<!-- layout tabs -->
<div class="t" style="left:100px;top:817px;font-size:14px;font-weight:bold;color:#333">模型</div>
<div class="t" style="left:141px;top:818px;font-size:12px;color:#555">Layout1</div>
<div class="t" style="left:198px;top:818px;font-size:12px;color:#555">Layout2</div>
<div class="t" style="left:29px;top:844px;color:#555">命令行</div>
<div class="b" style="left:27px;top:869px;width:1240px;height:53px;overflow:hidden;font:12px/16px 'Liberation Mono','Noto Sans CJK SC',monospace;color:#000;white-space:nowrap">
<div>正在打开 <span style="display:inline-block;width:123px;transform:scaleX(.854);transform-origin:0 50%">AutoCAD 2007 Drawing</span> 文件</div><div>命令:</div><div>命令:</div><div>命令:</div>
</div>
</body></html>
